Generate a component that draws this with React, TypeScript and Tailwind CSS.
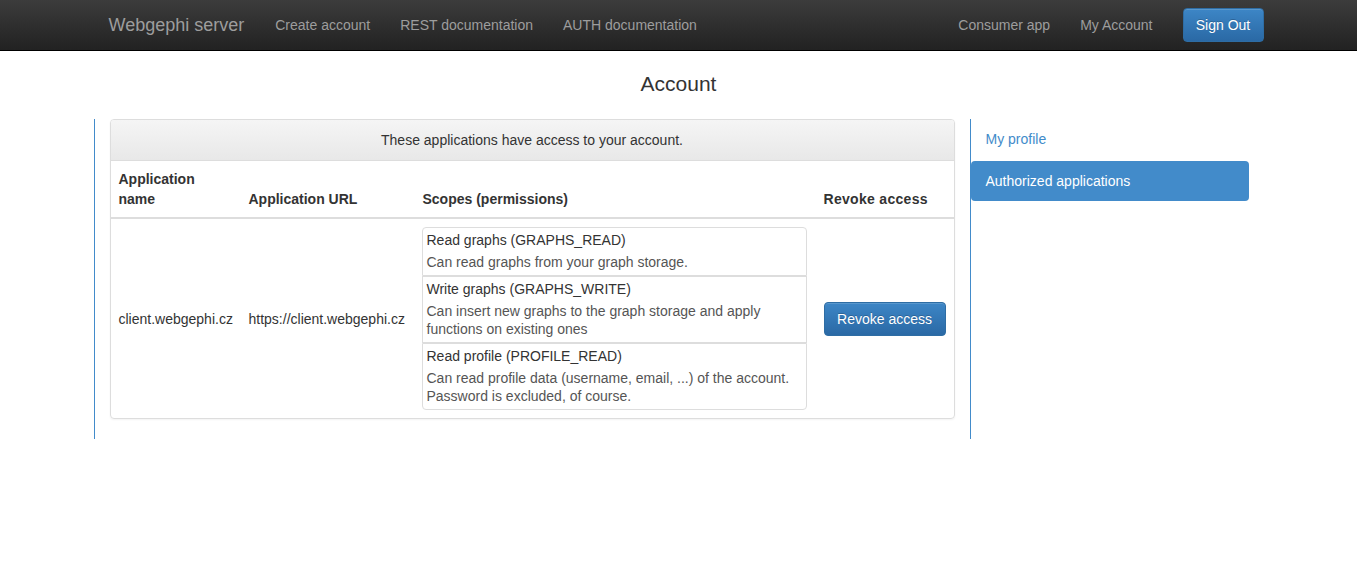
import React from "react"

// Bootstrap-3 style account page: dark navbar, authorized apps panel, side pills.

const scopes = [
  {
    title: "Read graphs (GRAPHS_READ)",
    text: "Can read graphs from your graph storage.",
  },
  {
    title: "Write graphs (GRAPHS_WRITE)",
    text: "Can insert new graphs to the graph storage and apply functions on existing ones",
  },
  {
    title: "Read profile (PROFILE_READ)",
    text: "Can read profile data (username, email, ...) of the account. Password is excluded, of course.",
  },
]

function Navbar() {
  return (
    <div className="h-[51px] border-b border-black bg-gradient-to-b from-[#3c3c3c] to-[#222222]">
      <div className="w-[1170px] mx-auto pl-[15px] h-[50px] flex items-center justify-between">
        <div className="flex items-center h-full">
          <span className="text-[18px] leading-[20px] text-[#9d9d9d] pr-[16px]">
            Webgephi server
          </span>
          {["Create account", "REST documentation", "AUTH documentation"].map((l) => (
            <span key={l} className="px-[15px] text-[14px] leading-[20px] text-[#9d9d9d]">
              {l}
            </span>
          ))}
        </div>
        <div className="flex items-center h-full">
          {["Consumer app", "My Account"].map((l) => (
            <span key={l} className="px-[15px] text-[14px] leading-[20px] text-[#9d9d9d]">
              {l}
            </span>
          ))}
          <button className="ml-[15px] h-[34px] w-[81px] rounded-[4px] border border-[#2e6da4] bg-gradient-to-b from-[#3d86c6] to-[#2a69a5] text-white text-[14px] leading-[20px] [text-shadow:0_-1px_0_rgba(0,0,0,0.2)] shadow-[inset_0_1px_0_rgba(255,255,255,0.15)]">
            Sign Out
          </button>
        </div>
      </div>
    </div>
  )
}

function ScopeList() {
  return (
    <div className="w-[385px]">
      {scopes.map((s, i) => (
        <div
          key={s.title}
          className={`border border-[#dddddd] px-[4px] pt-[2px] pb-[4px] ${
            i === 0 ? "rounded-t-[4px]" : ""
          } ${i === scopes.length - 1 ? "rounded-b-[4px]" : ""}`}
        >
          <div className="text-[14px] leading-[20px] text-[#333] mb-[3px]">{s.title}</div>
          <div className="text-[14px] leading-[18px] text-[#555]">{s.text}</div>
        </div>
      ))}
    </div>
  )
}

function AppsPanel() {
  return (
    <div className="border border-[#dddddd] rounded-[4px] shadow-[0_1px_2px_rgba(0,0,0,0.05)] mb-[20px]">
      <div className="px-[15px] py-[10px] text-center text-[14px] leading-[20px] text-[#333] bg-gradient-to-b from-[#f5f5f5] to-[#e8e8e8] border-b border-[#dddddd] rounded-t-[3px]">
        These applications have access to your account.
      </div>
      <table className="w-full table-fixed border-collapse text-[14px] leading-[20px] text-[#333]">
        <colgroup>
          <col className="w-[130px]" />
          <col className="w-[174px]" />
          <col className="w-[401px]" />
          <col />
        </colgroup>
        <thead>
          <tr>
            <th className="p-[8px] text-left align-bottom font-bold border-b-2 border-[#dddddd]">
              Application name
            </th>
            <th className="p-[8px] text-left align-bottom font-bold border-b-2 border-[#dddddd]">
              Application URL
            </th>
            <th className="p-[8px] text-left align-bottom font-bold border-b-2 border-[#dddddd]">
              Scopes (permissions)
            </th>
            <th className="p-[8px] text-left align-bottom font-bold border-b-2 border-[#dddddd] tracking-[0.3px]">
              Revoke access
            </th>
          </tr>
        </thead>
        <tbody>
          <tr>
            <td className="p-[8px] align-middle">client.webgephi.cz</td>
            <td className="p-[8px] align-middle whitespace-nowrap">https://client.webgephi.cz</td>
            <td className="p-[8px] pl-[7px] align-middle">
              <ScopeList />
            </td>
            <td className="p-[8px] align-middle">
              <button className="h-[34px] w-[122px] rounded-[4px] border border-[#2e6da4] bg-gradient-to-b from-[#3d86c6] to-[#2a69a5] text-white text-[14px] leading-[20px] [text-shadow:0_-1px_0_rgba(0,0,0,0.2)] shadow-[inset_0_1px_0_rgba(255,255,255,0.15)]">
                Revoke access
              </button>
            </td>
          </tr>
        </tbody>
      </table>
    </div>
  )
}

function Sidebar() {
  return (
    <div className="w-[294px] border-l border-[#428bca] pr-[15px]">
      <div className="h-[40px] px-[15px] flex items-center text-[14px] text-[#428bca] rounded-[4px]">
        My profile
      </div>
      <div className="mt-[2px] h-[40px] px-[15px] flex items-center text-[14px] text-white bg-[#428bca] rounded-[4px]">
        Authorized applications
      </div>
    </div>
  )
}

export default function App() {
  return (
    <div className="min-h-[572px] bg-white font-['Liberation_Sans',Arial,sans-serif]">
      <Navbar />
      <div className="w-[1170px] mx-auto">
        <h3 className="text-center text-[21px] leading-[24px] text-[#333] pt-[21px] pb-[22px]">
          Account
        </h3>
        <div className="flex mt-[1px]">
          <div className="w-[876px] border-l border-[#428bca] px-[15px]">
            <AppsPanel />
          </div>
          <Sidebar />
        </div>
      </div>
    </div>
  )
}
